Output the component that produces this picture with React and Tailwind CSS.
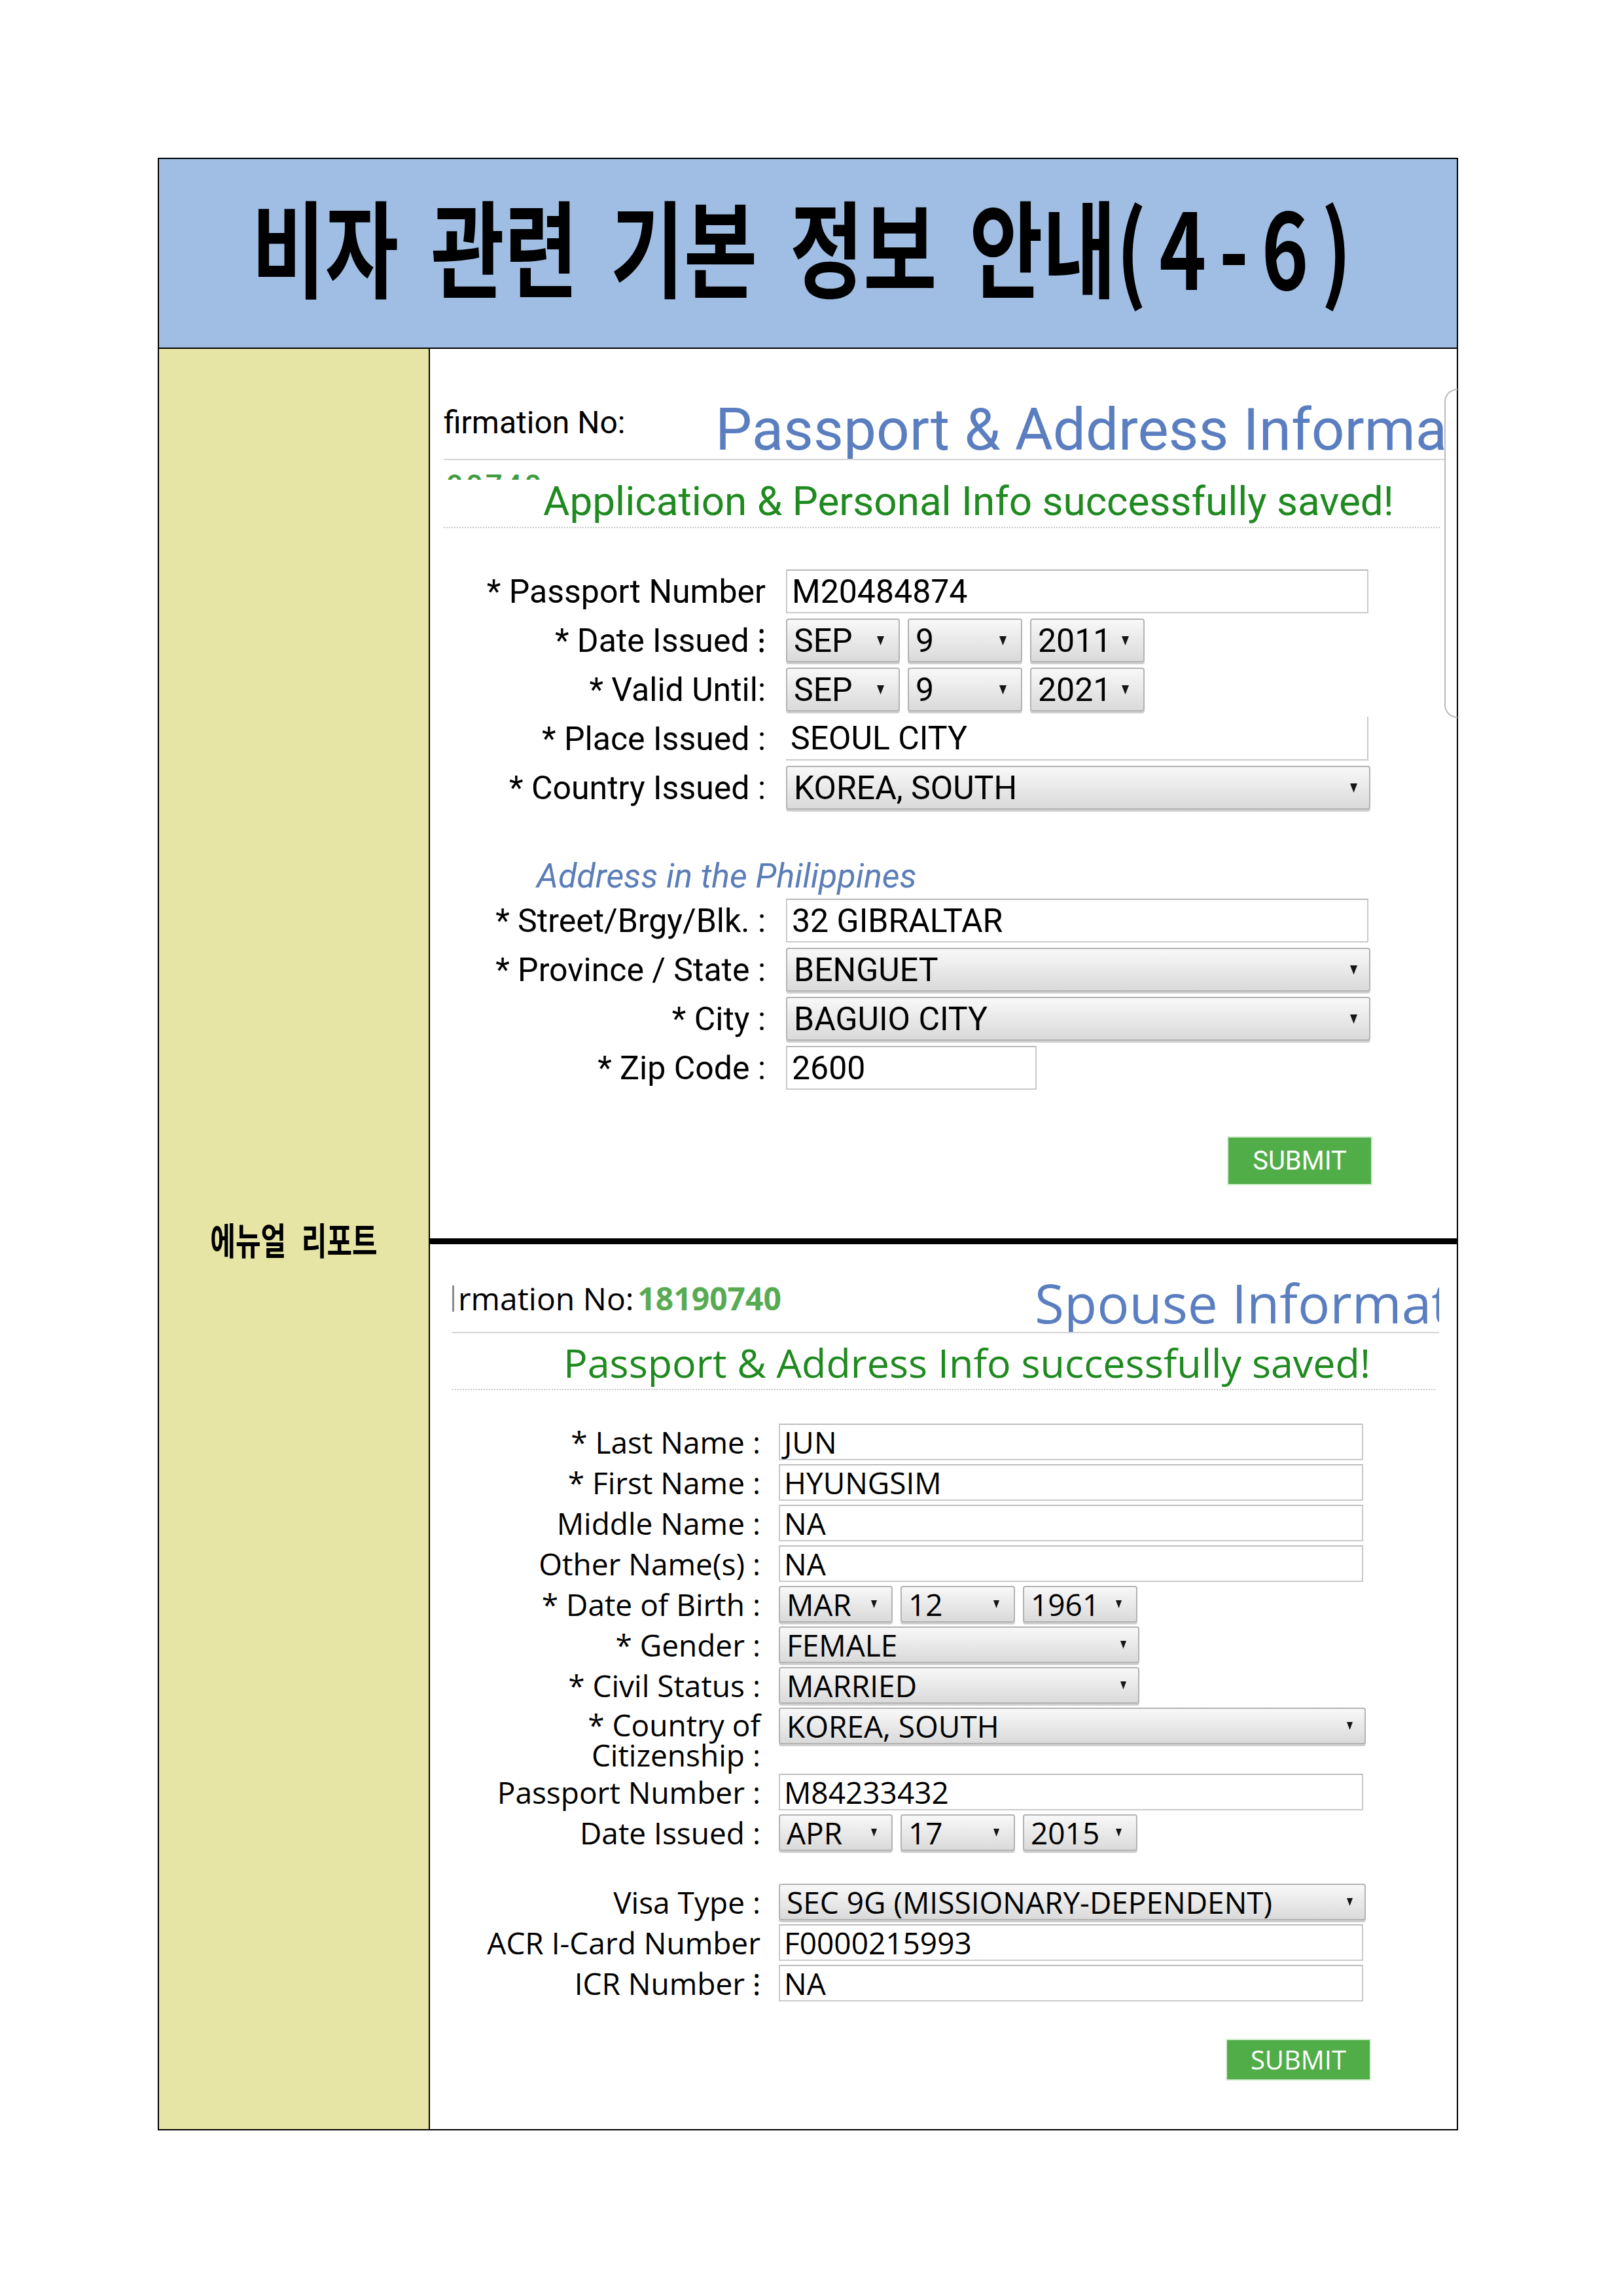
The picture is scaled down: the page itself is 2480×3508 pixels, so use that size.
function Arrow({ big }) {
  return big ? (
    <svg width="11" height="14" viewBox="0 0 11 14" className="shrink-0">
      <polygon points="0,0 11,0 5.5,14" fill="#151515" />
    </svg>
  ) : (
    <svg width="9" height="12" viewBox="0 0 9 12" className="shrink-0">
      <polygon points="0,0 9,0 4.5,12" fill="#151515" />
    </svg>
  )
}

function TopInput({ value, width = 'w-[890px]', border = 'border-2 border-[#cacaca] border-t-[#b9b9b9]' }) {
  return (
    <div className={`flex h-[67px] items-center bg-white pl-[7px] text-[50px] leading-none text-black ${border} ${width}`}>
      {value}
    </div>
  )
}

function TopSelect({ value, width = 'w-[893px]', pr = 'pr-[18px]' }) {
  return (
    <div
      className={`flex h-[67px] items-center justify-between rounded-[4px] border-2 border-[#b3b3b3] bg-linear-to-b from-[#f8f8f8] to-[#dadada] pl-[10px] text-[50px] leading-none text-black shadow-[0_3px_0_#cfcfcf] ${pr} ${width}`}
    >
      <span>{value}</span>
      <Arrow big />
    </div>
  )
}

function TopRow({ label, children }) {
  return (
    <div className="flex items-center">
      <div className="w-[492px] shrink-0 whitespace-nowrap text-right text-[50px] leading-none text-black">
        {label}
      </div>
      <div className="ml-[31px] flex gap-[12px]">{children}</div>
    </div>
  )
}

function DateSelects({ parts, Select }) {
  return (
    <>
      <Select value={parts[0]} width="w-[174px]" pr="pr-[22px]" />
      <Select value={parts[1]} width="w-[175px]" pr="pr-[22px]" />
      <Select value={parts[2]} width="w-[175px]" pr="pr-[22px]" />
    </>
  )
}

function BottomInput({ value }) {
  return (
    <div className="flex h-[56px] w-[893px] items-center border-2 border-[#cacaca] border-t-[#bdbdbd] bg-white pl-[6px] text-[46px] leading-none text-black">
      {value}
    </div>
  )
}

function BottomSelect({ value, width = 'w-[897px]', pr = 'pr-[18px]' }) {
  return (
    <div
      className={`flex h-[56px] items-center justify-between rounded-[4px] border-2 border-[#b3b3b3] bg-linear-to-b from-[#f8f8f8] to-[#dadada] pl-[10px] text-[46px] leading-none text-black shadow-[0_3px_0_#cfcfcf] ${pr} ${width}`}
    >
      <span className="whitespace-nowrap">{value}</span>
      <Arrow />
    </div>
  )
}

function BottomRow({ label, children, wrap }) {
  return (
    <div className="flex items-start">
      <div
        className={
          wrap
            ? 'w-[471px] shrink-0 pt-[3px] text-right text-[46px] leading-[46px] text-black'
            : 'w-[471px] shrink-0 whitespace-nowrap text-right text-[46px] leading-[56px] text-black'
        }
      >
        {label}
      </div>
      <div className="ml-[28px] flex gap-[12px]">{children}</div>
    </div>
  )
}

function SubmitButton({ height }) {
  return (
    <div
      className={`flex w-[222px] items-center justify-center border-2 border-[#d9eed6] bg-[#50ad48] text-[40px] leading-none text-white ${height}`}
    >
      SUBMIT
    </div>
  )
}

function PassportAddressShot() {
  return (
    <section className="relative h-[1359px] pl-[21px] font-['Roboto',sans-serif]">
      <div className="flex h-[170px] w-[1531px] items-start overflow-hidden whitespace-nowrap border-b-2 border-[#d3d3d3]">
        <div className="mt-[89px] w-[415px] shrink-0 text-[48px] leading-none text-black">
          firmation No:
        </div>
        <div className="mt-[79px] text-[89px] leading-none text-[#5a7ec0]">
          Passport &amp; Address Information
        </div>
      </div>
      <div className="mt-[22px] h-[8px] overflow-hidden pl-[4px]">
        <div className="-mt-[6px] text-[46px] font-medium leading-none tracking-[0.08em] text-[#3f9b3f]">
          90740
        </div>
      </div>
      <div className="mt-[2px] whitespace-nowrap pl-[152px] text-[62px] leading-none text-[#1f8a1f]">
        Application &amp; Personal Info successfully saved!
      </div>
      <div className="mt-[8px] w-[1522px] border-t-2 border-dotted border-[#c8c8c8]" />

      <div className="mt-[63px] flex flex-col gap-[8px]">
        <TopRow label="* Passport Number">
          <TopInput value="M20484874" />
        </TopRow>
        <TopRow label="* Date Issued ⁝">
          <DateSelects parts={['SEP', '9', '2011']} Select={TopSelect} />
        </TopRow>
        <TopRow label="* Valid Until:">
          <DateSelects parts={['SEP', '9', '2021']} Select={TopSelect} />
        </TopRow>
        <TopRow label="* Place Issued :">
          <TopInput value="SEOUL CITY" border="border-r-2 border-b-2 border-[#cacaca]" />
        </TopRow>
        <TopRow label="* Country Issued :">
          <TopSelect value="KOREA, SOUTH" />
        </TopRow>
      </div>

      <div className="mt-[76px] pl-[142px] text-[52px] italic leading-none text-[#5b7db8]">
        Address in the Philippines
      </div>

      <div className="mt-[8px] flex flex-col gap-[8px]">
        <TopRow label="* Street/Brgy/Blk. :">
          <TopInput value="32 GIBRALTAR" />
        </TopRow>
        <TopRow label="* Province / State :">
          <TopSelect value="BENGUET" />
        </TopRow>
        <TopRow label="* City :">
          <TopSelect value="BAGUIO CITY" />
        </TopRow>
        <TopRow label="* Zip Code :">
          <TopInput value="2600" width="w-[383px]" />
        </TopRow>
      </div>

      <div className="ml-[1197px] mt-[71px]">
        <SubmitButton height="h-[75px]" />
      </div>

      <div className="absolute left-[1550px] top-[61px] h-[503px] w-[20px] rounded-l-[26px] border-y-2 border-l-2 border-[#bcbcbc]" />
    </section>
  )
}

function SpouseShot() {
  return (
    <section className="h-[1352px] pl-[34px] font-['Open_Sans',sans-serif]">
      <div className="flex h-[136px] w-[1508px] items-start overflow-hidden whitespace-nowrap border-b-2 border-[#d3d3d3]">
        <div className="mt-[59px] flex w-[890px] shrink-0 items-center text-[48px] leading-none text-black">
          <span className="mr-[6px] h-[40px] w-[3px] bg-[#8a8a8a]" />
          <span>rmation No:</span>
          <span className="ml-[6px] font-bold text-[#58aa53]">18190740</span>
        </div>
        <div className="mt-[48px] text-[82px] leading-none text-[#5a7ec0]">
          Spouse Information
        </div>
      </div>
      <div className="mt-[14px] whitespace-nowrap pl-[170px] text-[61px] leading-none text-[#1f8a1f]">
        Passport &amp; Address Info successfully saved!
      </div>
      <div className="mt-[10px] w-[1502px] border-t-2 border-dotted border-[#c8c8c8]" />

      <div className="mt-[51px] flex flex-col gap-[6px]">
        <BottomRow label="* Last Name :">
          <BottomInput value="JUN" />
        </BottomRow>
        <BottomRow label="* First Name :">
          <BottomInput value="HYUNGSIM" />
        </BottomRow>
        <BottomRow label="Middle Name :">
          <BottomInput value="NA" />
        </BottomRow>
        <BottomRow label="Other Name(s) :">
          <BottomInput value="NA" />
        </BottomRow>
        <BottomRow label="* Date of Birth :">
          <DateSelects parts={['MAR', '12', '1961']} Select={BottomSelect} />
        </BottomRow>
        <BottomRow label="* Gender :">
          <BottomSelect value="FEMALE" width="w-[551px]" />
        </BottomRow>
        <BottomRow label="* Civil Status :">
          <BottomSelect value="MARRIED" width="w-[551px]" />
        </BottomRow>
        <BottomRow label="* Country of Citizenship :" wrap>
          <BottomSelect value="KOREA, SOUTH" />
        </BottomRow>
        <BottomRow label="Passport Number :">
          <BottomInput value="M84233432" />
        </BottomRow>
        <BottomRow label="Date Issued :">
          <DateSelects parts={['APR', '17', '2015']} Select={BottomSelect} />
        </BottomRow>
      </div>

      <div className="mt-[50px] flex flex-col gap-[6px]">
        <BottomRow label="Visa Type :">
          <BottomSelect value="SEC 9G (MISSIONARY-DEPENDENT)" />
        </BottomRow>
        <BottomRow label="ACR I-Card Number">
          <BottomInput value="F0000215993" />
        </BottomRow>
        <BottomRow label="ICR Number ⁝">
          <BottomInput value="NA" />
        </BottomRow>
      </div>

      <div className="ml-[1182px] mt-[57px]">
        <SubmitButton height="h-[64px]" />
      </div>
    </section>
  )
}

function App() {
  return (
    <main className="h-[3508px] w-[2480px] bg-white pl-[241px] pt-[241px]">
      <div className="w-[1987px] border-2 border-black">
        <header className="flex h-[290px] items-center justify-center border-b-2 border-black bg-[#a0bee3] pb-[28px]">
          <h1 className="scale-y-[1.32] whitespace-nowrap font-['Noto_Sans_CJK_KR',sans-serif] text-[122px] font-bold leading-none text-black [word-spacing:22px]">
            비자 관련 기본 정보 안내<span className="tracking-[0.16em]">(4-6)</span>
          </h1>
        </header>
        <div className="flex h-[2720px]">
          <aside className="flex w-[414px] shrink-0 items-center justify-center border-r-2 border-black bg-[#e6e5a6]">
            <p className="scale-y-[1.35] whitespace-nowrap font-['Noto_Sans_CJK_KR',sans-serif] text-[42px] font-bold leading-none text-black [word-spacing:14px]">
              에뉴얼 리포트
            </p>
          </aside>
          <div className="flex flex-1 flex-col">
            <PassportAddressShot />
            <div className="h-[9px] bg-black" />
            <SpouseShot />
          </div>
        </div>
      </div>
    </main>
  )
}

export default App
